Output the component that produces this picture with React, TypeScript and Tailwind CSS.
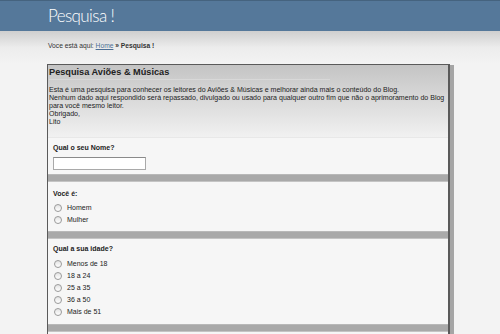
import React from "react";

const Radio = ({ label }: { label: string }) => (
  <div className="flex items-center h-[12px]">
    <span className="w-[8px] h-[8px] rounded-full border border-[#9a9a9a] bg-gradient-to-b from-[#e4e4e4] to-white mr-[5px] ml-[1px]" />
    <span>{label}</span>
  </div>
);

const Bar = () => (
  <div className="h-[8px] bg-[#a9a9a9] border-t border-[#b8b8b8] border-b border-b-[#c4c4c4]" />
);

export default function App() {
  return (
    <div
      className="w-[500px] h-[334px] overflow-hidden bg-[#f3f3f3] text-[#222]"
      style={{ fontFamily: "'Liberation Sans', Arial, sans-serif" }}
    >
      <div className="h-[31px] bg-[#55789a] border-t border-[#45637f] pl-[48px] flex items-center">
        <span
          className="text-white text-[17px] font-light leading-none tracking-[-0.6px] pb-[2px]"
          style={{ fontFamily: "Lato, 'Open Sans', sans-serif" }}
        >
          Pesquisa !
        </span>
      </div>
      <div className="bg-gradient-to-b from-[#cfcfcf] via-[#ececec] to-[#f3f3f3] h-[33px] pl-[48px] pt-[10px] text-[6.7px] text-[#333]">
        <span>Voce está aqui: </span>
        <span className="text-[#4d6f94] underline">Home</span>
        <span className="font-bold"> » Pesquisa !</span>
      </div>
      <div className="ml-[47px] w-[407px] flex">
        <div className="w-[403px] border-l border-t border-r-2 border-[#5a5a5a] bg-[#f6f6f6]">
          <div className="bg-gradient-to-b from-[#c4c4c4] to-[#f1f1f1] h-[72px] px-[1px] text-[7.05px] leading-[8px] text-[#222]">
            <div className="font-bold text-[9.2px] leading-[12px] pt-[1px] pb-[1px] border-b border-[#d8d8d8] w-[281px]">
              Pesquisa Aviões &amp; Músicas
            </div>
            <div className="pt-[6px]">
              Esta é uma pesquisa para conhecer os leitores do Aviões &amp; Músicas e melhorar ainda mais o conteúdo do Blog.
              <br />
              Nenhum dado aqui respondido será repassado, divulgado ou usado para qualquer outro fim que não o aprimoramento do Blog para você mesmo leitor.
              <br />
              Obrigado,
              <br />
              Lito
            </div>
          </div>
          <div className="border-t border-[#e8e8e8] h-[1px] bg-white" />
          <div className="px-[5px] text-[7px]">
            <div className="font-bold pt-[5px] h-[19px]">Qual o seu Nome?</div>
            <div className="w-[93px] h-[13px] bg-white border border-[#a9a9a9] border-t-[#8a8a8a]" />
            <div className="h-[4px]" />
          </div>
          <Bar />
          <div className="px-[5px] text-[7px]">
            <div className="font-bold pt-[7px] h-[20px]">Você é:</div>
            <Radio label="Homem" />
            <Radio label="Mulher" />
            <div className="h-[5px]" />
          </div>
          <Bar />
          <div className="px-[5px] text-[7px]">
            <div className="font-bold pt-[5px] h-[19px]">Qual a sua idade?</div>
            <Radio label="Menos de 18" />
            <Radio label="18 a 24" />
            <Radio label="25 a 35" />
            <Radio label="36 a 50" />
            <Radio label="Mais de 51" />
            <div className="h-[6px]" />
          </div>
          <Bar />
          <div className="h-[20px]" />
        </div>
        <div className="w-[4px] bg-[#a5a5a5] mt-[1px]" />
      </div>
    </div>
  );
}
